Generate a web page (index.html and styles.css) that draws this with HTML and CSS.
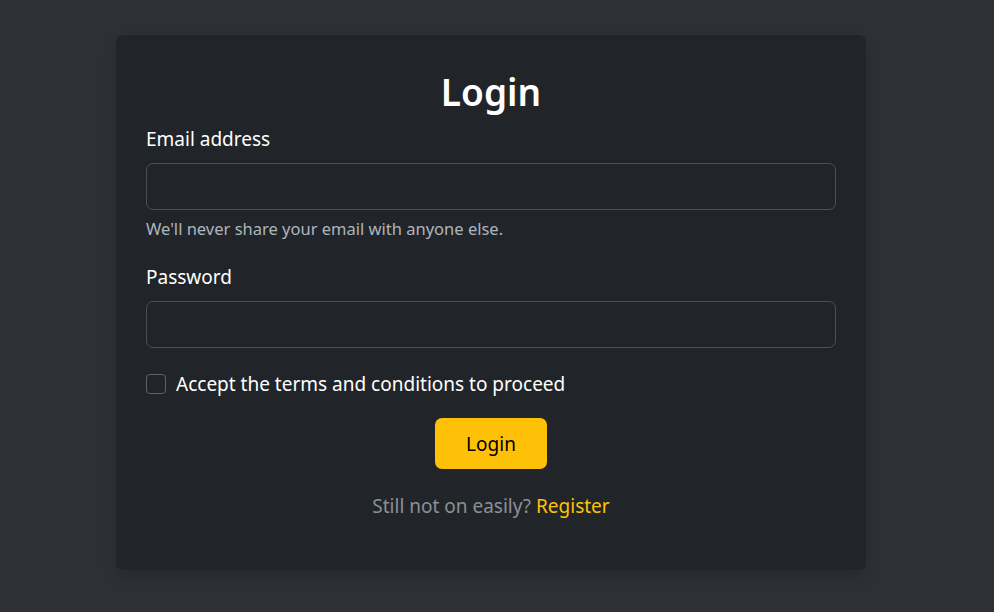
FILE: index.html
```html
<!DOCTYPE html>
<html lang="en">
<head>
<meta charset="utf-8">
<title>Login</title>
<link rel="stylesheet" href="styles.css">
</head>
<body>
<main class="page">
  <form class="card">
    <h1 class="title">Login</h1>
    <div class="field">
      <label class="label" for="email">Email address</label>
      <input class="input" id="email" type="email">
      <div class="help">We'll never share your email with anyone else.</div>
    </div>
    <div class="field">
      <label class="label" for="password">Password</label>
      <input class="input" id="password" type="password">
    </div>
    <label class="check">
      <span class="box"></span>
      <span>Accept the terms and conditions to proceed</span>
    </label>
    <div class="actions">
      <button type="button" class="btn">Login</button>
    </div>
    <p class="footer">Still not on easily? <a href="#" class="link">Register</a></p>
  </form>
</main>
</body>
</html>
```
FILE: styles.css
```css
* { box-sizing: border-box; }
html, body { margin: 0; height: 100%; }
body {
  background: #2d3135;
  color: #fff;
  font-family: "Noto Sans", "Open Sans", sans-serif;
  font-size: 19px;
  line-height: 1.5;
}
.page {
  padding: 35px 0 0 116px;
}
.card {
  width: 750px;
  height: 535px;
  background: #212529;
  border-radius: 7px;
  box-shadow: 0 8px 16px rgba(0, 0, 0, 0.15);
  padding: 33px 30px 30px;
  display: flex;
  flex-direction: column;
}
.title {
  margin: 0 0 8px;
  text-align: center;
  font-size: 37px;
  line-height: 48px;
  font-weight: 600;
}
.field { display: flex; flex-direction: column; }
.field + .field { margin-top: 20px; }
.label {
  line-height: 30px;
  margin-bottom: 9px;
}
.input {
  height: 47px;
  width: 100%;
  background: #212529;
  border: 1px solid #495057;
  border-radius: 7px;
  color: #fff;
  font: inherit;
  padding: 0 16px;
}
.help {
  margin-top: 6px;
  font-size: 16.5px;
  line-height: 26px;
  color: #adb5bd;
}
.check {
  margin-top: 21px;
  display: flex;
  align-items: center;
  gap: 10px;
  line-height: 30px;
}
.box {
  width: 20px;
  height: 20px;
  border: 1px solid #5c636a;
  border-radius: 4px;
  background: #212529;
  flex: none;
}
.actions {
  margin-top: 19px;
  display: flex;
  justify-content: center;
}
.btn {
  width: 112px;
  height: 51px;
  border: 0;
  border-radius: 7px;
  background: #ffc107;
  color: #000;
  font: inherit;
  padding: 2px 0 0;
}
.footer {
  margin: 22px 0 0;
  text-align: center;
  line-height: 30px;
  color: #8b9096;
}
.link {
  color: #ffc107;
  text-decoration: none;
}
```
